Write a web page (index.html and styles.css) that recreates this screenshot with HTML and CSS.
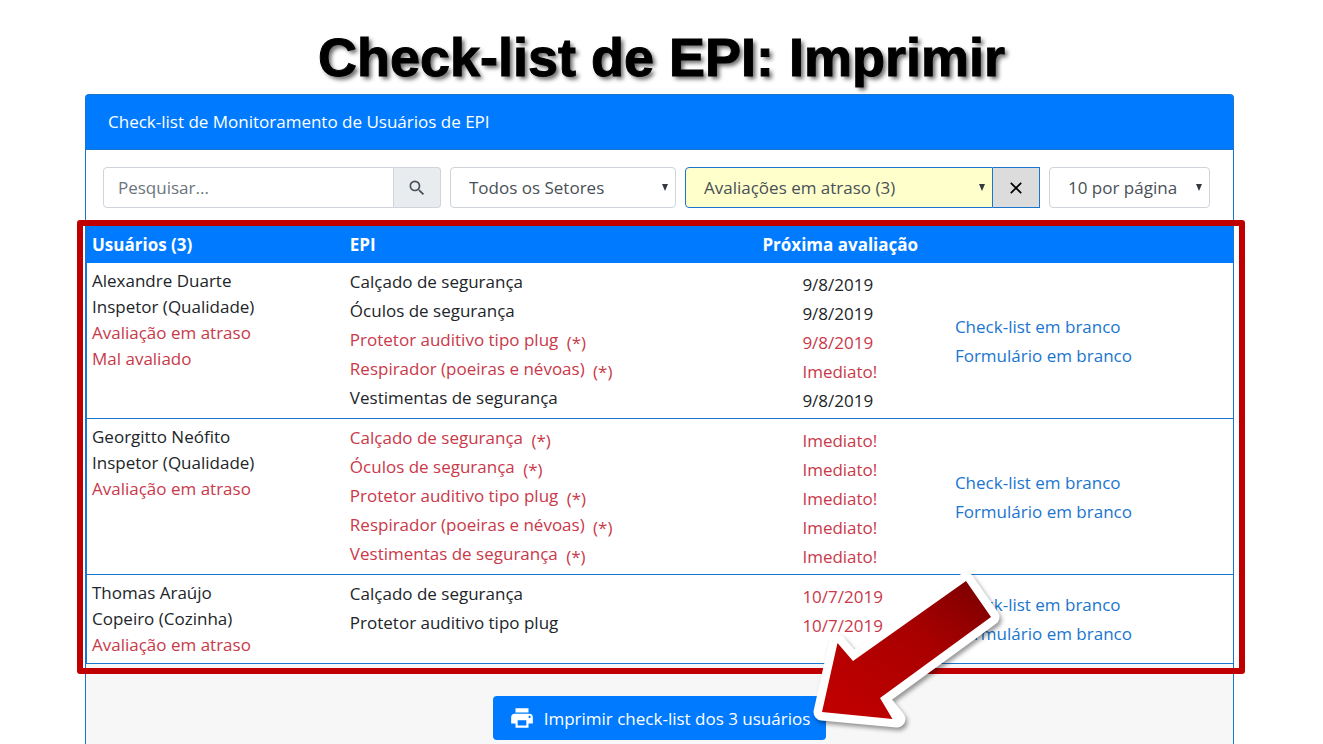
FILE: index.html
```html
<!DOCTYPE html>
<html lang="pt-BR">
<head>
  <meta charset="UTF-8" />
  <meta name="viewport" content="width=device-width, initial-scale=1.0"/>
  <title>Check-list de EPI: Imprimir</title>
  <link rel="stylesheet" href="styles.css">
</head>
<body>
  <h1 class="page-title">Check-list de EPI: Imprimir</h1>

  <div class="card">
    <div class="card-header">Check-list de Monitoramento de Usuários de EPI</div>

    <!-- Filters -->
    <form class="filters">
      <div class="group search">
        <input type="text" class="control" placeholder="Pesquisar..." aria-label="Pesquisar">
        <button type="button" class="addon" aria-label="Buscar">
          <svg width="20" height="20" viewBox="0 0 24 24" fill="#495057"><path d="M15.5 14h-.79l-.28-.27A6.47 6.47 0 0 0 16 9.5 6.5 6.5 0 1 0 9.5 16c1.61 0 3.09-.59 4.23-1.57l.27.28v.79l5 4.99L20.49 19l-4.99-5zm-6 0C7.01 14 5 11.99 5 9.5S7.01 5 9.5 5 14 7.01 14 9.5 11.99 14 9.5 14z"/></svg>
        </button>
      </div>
      <div class="group sector">
        <div class="select-wrap">
          <select class="control" aria-label="Setor">
            <option>Todos os Setores</option>
          </select>
          <svg class="caret" width="6" height="7" viewBox="0 0 6 7"><path d="M0 0h6L3 7z"/></svg>
        </div>
      </div>
      <div class="group status">
        <div class="select-wrap">
          <select class="control" aria-label="Situação">
            <option>Avaliações em atraso (3)</option>
          </select>
          <svg class="caret" width="6" height="7" viewBox="0 0 6 7"><path d="M0 0h6L3 7z"/></svg>
        </div>
        <button type="button" class="addon" aria-label="Limpar filtro">
          <svg width="12" height="12" viewBox="0 0 12 12" stroke="#000" stroke-width="1.7"><path d="M.8.8l10.4 10.4M11.2.8L.8 11.2"/></svg>
        </button>
      </div>
      <div class="group paging">
        <div class="select-wrap">
          <select class="control" aria-label="Itens por página">
            <option>10 por página</option>
          </select>
          <svg class="caret" width="6" height="7" viewBox="0 0 6 7"><path d="M0 0h6L3 7z"/></svg>
        </div>
      </div>
    </form>

    <!-- Users -->
    <div class="table-wrap">
      <table class="users">
        <thead>
          <tr>
            <th class="col-user">Usuários (3)</th>
            <th class="col-epi">EPI</th>
            <th class="col-date">Próxima avaliação</th>
            <th class="col-links"></th>
          </tr>
        </thead>
        <tbody>
          <tr>
            <td class="user">
              <div>Alexandre Duarte</div>
              <div>Inspetor (Qualidade)</div>
              <div class="late">Avaliação em atraso</div>
              <div class="late">Mal avaliado</div>
            </td>
            <td class="epi">
              <div>Calçado de segurança</div>
              <div>Óculos de segurança</div>
              <div class="late">Protetor auditivo tipo plug <span class="mark">(*)</span></div>
              <div class="late">Respirador (poeiras e névoas) <span class="mark">(*)</span></div>
              <div>Vestimentas de segurança</div>
            </td>
            <td class="date">
              <div>9/8/2019</div>
              <div>9/8/2019</div>
              <div class="late">9/8/2019</div>
              <div class="late">Imediato!</div>
              <div>9/8/2019</div>
            </td>
            <td class="links">
              <a href="#">Check-list em branco</a>
              <a href="#">Formulário em branco</a>
            </td>
          </tr>
          <tr>
            <td class="user">
              <div>Georgitto Neófito</div>
              <div>Inspetor (Qualidade)</div>
              <div class="late">Avaliação em atraso</div>
            </td>
            <td class="epi late">
              <div>Calçado de segurança <span class="mark">(*)</span></div>
              <div>Óculos de segurança <span class="mark">(*)</span></div>
              <div>Protetor auditivo tipo plug <span class="mark">(*)</span></div>
              <div>Respirador (poeiras e névoas) <span class="mark">(*)</span></div>
              <div>Vestimentas de segurança <span class="mark">(*)</span></div>
            </td>
            <td class="date late">
              <div>Imediato!</div>
              <div>Imediato!</div>
              <div>Imediato!</div>
              <div>Imediato!</div>
              <div>Imediato!</div>
            </td>
            <td class="links">
              <a href="#">Check-list em branco</a>
              <a href="#">Formulário em branco</a>
            </td>
          </tr>
          <tr>
            <td class="user">
              <div>Thomas Araújo</div>
              <div>Copeiro (Cozinha)</div>
              <div class="late">Avaliação em atraso</div>
            </td>
            <td class="epi">
              <div>Calçado de segurança</div>
              <div>Protetor auditivo tipo plug</div>
            </td>
            <td class="date late">
              <div>10/7/2019</div>
              <div>10/7/2019</div>
            </td>
            <td class="links">
              <a href="#">Check-list em branco</a>
              <a href="#">Formulário em branco</a>
            </td>
          </tr>
        </tbody>
      </table>
      <div class="highlight"></div>
    </div>

    <div class="card-footer">
      <div class="print">
        <button type="button" class="print-btn">
          <svg width="26" height="26" viewBox="0 0 24 24" fill="#fff"><path d="M19 8H5c-1.66 0-3 1.34-3 3v6h4v4h12v-4h4v-6c0-1.66-1.34-3-3-3zm-3 11H8v-5h8v5zm3-7c-.55 0-1-.45-1-1s.45-1 1-1 1 .45 1 1-.45 1-1 1zm-1-9H6v4h12V3z"/></svg>
          Imprimir check-list dos 3 usuários
        </button>
        <svg class="arrow" width="210" height="175" viewBox="805 565 210 175">
          <defs>
            <linearGradient id="arrowFill" x1="0" y1="1" x2="1" y2="0">
              <stop offset="0" stop-color="#c40000"/>
              <stop offset="0.6" stop-color="#a80000"/>
              <stop offset="1" stop-color="#780000"/>
            </linearGradient>
          </defs>
          <path d="M837.5 643L853 661 966 581 991 617 880 698 897 719 822 712z" fill="#fff" stroke="#fff" stroke-width="17" stroke-linejoin="round"/>
          <path d="M837.5 643L853 661 966 581 991 617 880 698 892.500 719 822 712z" fill="url(#arrowFill)"/>
        </svg>
      </div>
    </div>
  </div>
</body>
</html>
```

FILE: styles.css
```css
* {
  box-sizing: border-box;
}

body {
  margin: 0;
  min-height: 100vh;
  display: flex;
  flex-direction: column;
  background: #fff;
  color: #212529;
  font-family: "Open Sans", sans-serif;
  font-size: 17px;
  line-height: 29px;
}

.page-title {
  margin: 0;
  padding: 22px 0 2px;
  font-family: "Arial Rounded MT Bold", "Liberation Sans", Arial, sans-serif;
  font-size: 54px;
  font-weight: bold;
  line-height: 70px;
  text-align: center;
  color: #000;
  -webkit-text-stroke: 1px #000;
  text-shadow: 3px 3px 4px rgba(0, 0, 0, 0.6);
}

.card {
  flex: 1;
  display: flex;
  flex-direction: column;
  margin: 0 89px 0 85px;
  border: 1px solid #1a75cf;
  border-bottom: none;
  border-radius: 4px 4px 0 0;
}

.card-header {
  padding: 13px 22px;
  background: #007bff;
  border-bottom: 1px solid #1a75cf;
  color: #fff;
  line-height: 28px;
}

/* Filters */
.filters {
  display: flex;
  gap: 9px;
  padding: 17px 23px 18px 17px;
}

.group {
  display: flex;
  min-width: 0;
}

.search {
  flex: 338 1 0;
}

.sector {
  flex: 226 1 0;
}

.status {
  flex: 355 1 0;
}

.paging {
  flex: 161 1 0;
}

.select-wrap {
  position: relative;
  flex: 1;
  min-width: 0;
}

.control {
  flex: 1;
  width: 100%;
  min-width: 0;
  height: 41px;
  padding: 0 14px;
  border: 1px solid #ced4da;
  border-radius: 4px;
  background: #fff;
  color: #495057;
  font: inherit;
}

.control::placeholder {
  color: #6c757d;
}

select.control {
  appearance: none;
  padding: 0 18px;
}

.caret {
  position: absolute;
  top: 17px;
  right: 8px;
  fill: #343a40;
  pointer-events: none;
}

.addon {
  flex: none;
  display: flex;
  justify-content: center;
  align-items: center;
  width: 47px;
  padding: 0;
  border: 1px solid #ced4da;
  border-left: none;
  border-radius: 0 4px 4px 0;
  background: #e9ecef;
}

.search .control,
.status .control {
  border-radius: 4px 0 0 4px;
}

.status .control {
  background: #ffffcc;
  border-color: #1a75cf;
}

.status .addon {
  border-color: #1a75cf;
  border-radius: 0;
  background: #dcdcdc;
}

/* Users table */
.table-wrap {
  position: relative;
}

.users {
  width: 100%;
  table-layout: fixed;
  border-collapse: separate;
  border-spacing: 0;
  border-left: 1px solid #1a75cf;
}

.users th {
  padding: 4px 5px;
  background: #007bff;
  color: #fff;
  font-weight: bold;
  text-align: left;
}

.users td {
  padding: 5px;
  border-bottom: 1px solid #1a75cf;
  vertical-align: top;
}

.col-user {
  width: 22.5%;
}

.col-epi {
  width: 36%;
}

.col-date {
  width: 16.8%;
}

.user {
  line-height: 26px;
}

.users .epi {
  padding: 4px 5px 6px;
}

.users .date {
  padding: 7px 5px 3px 45px;
}

.users .links {
  vertical-align: middle;
}

.links a {
  display: block;
  color: #1a75cf;
  text-decoration: none;
}

.late {
  color: #c9394a;
}

.mark {
  margin-left: 4px;
  line-height: 1;
  vertical-align: -3px;
}

.highlight {
  position: absolute;
  top: -6px;
  right: -12px;
  bottom: -10px;
  left: -9px;
  border: 6px solid #c00000;
  border-radius: 3px;
  pointer-events: none;
}

/* Footer */
.card-footer {
  flex: 1;
  display: flex;
  justify-content: center;
  align-items: flex-start;
  padding-top: 32px;
  background: #f7f7f7;
}

.print {
  position: relative;
}

.print-btn {
  display: flex;
  align-items: center;
  gap: 9px;
  height: 44px;
  padding: 0 16px;
  border: none;
  border-radius: 4px;
  background: #007bff;
  color: #fff;
  font: inherit;
}

.arrow {
  position: absolute;
  top: -131px;
  left: 312px;
  filter: drop-shadow(2px 3px 2px rgba(0, 0, 0, 0.4));
  pointer-events: none;
}
```
